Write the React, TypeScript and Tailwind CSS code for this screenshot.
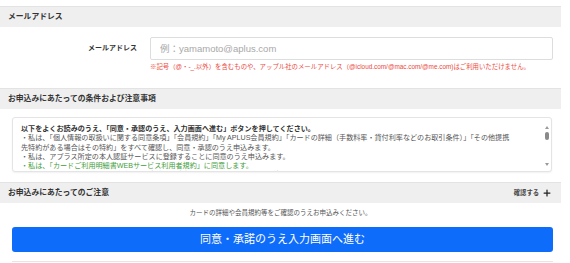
import { Plus } from "lucide-react";

const FONT = "font-['Liberation_Sans','Noto_Sans_CJK_JP',sans-serif]";

function SectionHeader({ title, right }: { title: string; right?: React.ReactNode }) {
  return (
    <div className="flex h-[21px] items-center justify-between border-t border-[#e3e3e3] bg-[#efefef] pl-[8px] pr-[9px]">
      <span className="text-[7.8px] font-bold text-[#333]">{title}</span>
      {right}
    </div>
  );
}

export default function App() {
  return (
    <div className={`h-[263px] w-[570px] overflow-hidden bg-white pt-[6px] ${FONT}`}>
      <div className="w-[561px]">
        <SectionHeader title="メールアドレス" />

        {/* email input */}
        <div className="mt-[10px] flex items-center">
          <label className="w-[137px] text-right text-[7px] font-bold text-[#333]">メールアドレス</label>
          <input
            type="text"
            placeholder="例：yamamoto@aplus.com"
            className="ml-[13px] h-[23px] w-[403px] rounded-[2px] border border-[#dddddd] bg-white px-[9px] text-[9.5px] text-[#333] outline-none placeholder:text-[#a8a8a8]"
          />
        </div>
        <p className="ml-[150px] mt-[3px] whitespace-nowrap text-[6.4px] leading-[8px] text-[#ea4a42]">
          ※記号（@・-_.以外）を含むものや、アップル社のメールアドレス（@icloud.com/@mac.com/@me.com)はご利用いただけません。
        </p>

        <div className="mt-[17px]">
          <SectionHeader title="お申込みにあたっての条件および注意事項" />
        </div>

        {/* terms box */}
        <div className="relative ml-[12px] mt-[8px] h-[55px] w-[540px] overflow-hidden rounded-[3px] border border-[#e4e4e4] bg-white shadow-[0_1px_2px_rgba(0,0,0,0.06)]">
          <div className="whitespace-nowrap pl-[8px] pr-[14px] pt-[7px] text-[7.1px] leading-[9.3px] text-[#555]">
            <p className="font-bold text-[#333]">
              以下をよくお読みのうえ、「同意・承認のうえ、入力画面へ進む」ボタンを押してください。
            </p>
            <p>
              ・私は、「個人情報の取扱いに関する同意条項」「会員規約」「My APLUS会員規約」「カードの詳細（手数料率・貸付利率などのお取引条件）」「その他提携
            </p>
            <p>先特約がある場合はその特約」をすべて確認し、同意・承認のうえ申込みます。</p>
            <p>・私は、アプラス所定の本人認証サービスに登録することに同意のうえ申込みます。</p>
            <p className="text-[#3f9d3a]">・私は、「カードご利用明細書WEBサービス利用者規約」に同意します。</p>
            <p>・私は、カードのショッピングご利用代金等のお支払いについて、リボルビング払いを利用することに同意します。</p>
          </div>
          {/* scrollbar */}
          <div className="absolute right-[2px] top-[8px] flex flex-col items-center">
            <div className="h-0 w-0 border-x-[2.5px] border-b-[3px] border-x-transparent border-b-[#9a9a9a]" />
            <div className="mt-[3px] h-[8px] w-[4px] rounded-[2px] bg-[#8a8a8a]" />
          </div>
          <div className="absolute bottom-[5px] right-[2px] h-0 w-0 border-x-[2.5px] border-t-[3px] border-x-transparent border-t-[#9a9a9a]" />
        </div>

        <div className="mt-[10px]">
          <SectionHeader
            title="お申込みにあたってのご注意"
            right={
              <span className="flex items-center gap-[3px] text-[6.3px] font-bold text-[#444]">
                確認する
                <Plus size={10} strokeWidth={3} className="text-[#222]" />
              </span>
            }
          />
        </div>

        <p className="mt-[6px] text-center text-[6.5px] leading-[8px] text-[#555]">
          カードの詳細や会員規約等をご確認のうえお申込みください。
        </p>

        <button className="ml-[12px] mt-[10px] flex h-[25px] w-[541px] items-center justify-center rounded-[3px] bg-[#0e6cfa] text-[11px] text-white">
          同意・承諾のうえ入力画面へ進む
        </button>

        <div className="ml-[12px] mt-[9px] w-[541px] border-t border-[#e6e6e6]" />
      </div>
    </div>
  );
}
